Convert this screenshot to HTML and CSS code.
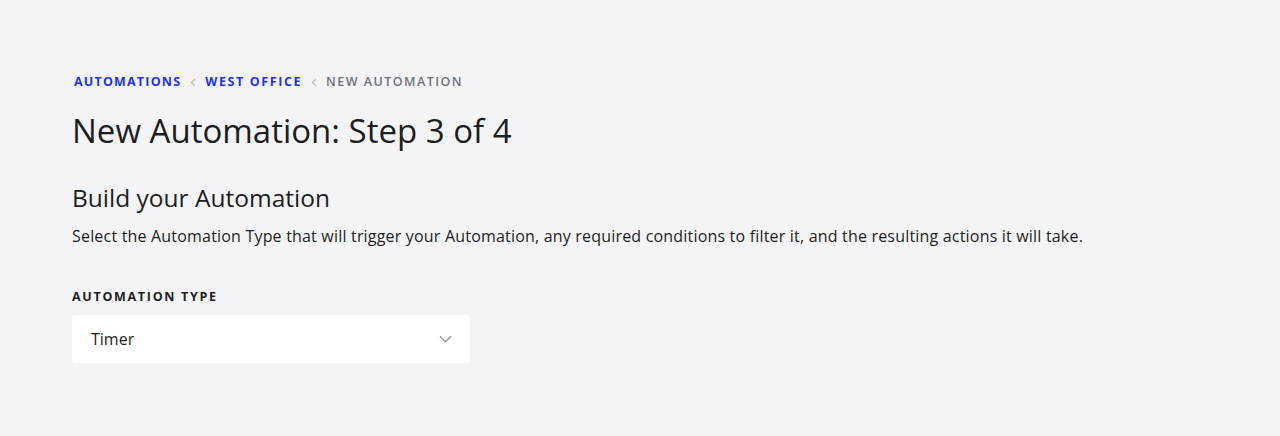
FILE: index.html
```html
<!DOCTYPE html>
<html lang="en">
<head>
<meta charset="utf-8">
<link rel="stylesheet" href="styles.css">
</head>
<body>
<main class="page">
  <nav class="crumbs">
    <a class="crumb link">Automations</a>
    <svg class="sep" width="6" height="9" viewBox="0 0 6 9"><path d="M5 1L1.5 4.5 5 8" fill="none" stroke="#bcc0c4" stroke-width="1.3"/></svg>
    <a class="crumb link wide">West Office</a>
    <svg class="sep" width="6" height="9" viewBox="0 0 6 9"><path d="M5 1L1.5 4.5 5 8" fill="none" stroke="#bcc0c4" stroke-width="1.3"/></svg>
    <span class="crumb current">New Automation</span>
  </nav>
  <h1 class="title">New Automation: Step 3 of 4</h1>
  <h2 class="subtitle">Build your Automation</h2>
  <p class="desc">Select the Automation Type that will trigger your Automation, any required conditions to filter it, and the resulting actions it will take.</p>
  <div class="field">
    <label class="label">Automation Type</label>
    <div class="select">
      <span class="value">Timer</span>
      <svg class="chev" width="13" height="8" viewBox="0 0 13 8"><path d="M1 1.2l5.5 5.5 5.5-5.5" fill="none" stroke="#8a8d91" stroke-width="1.3"/></svg>
    </div>
  </div>
</main>
</body>
</html>
```
FILE: styles.css
```css
html, body { margin: 0; padding: 0; }
body {
  background: #f4f4f6;
  font-family: "Open Sans", "Noto Sans", sans-serif;
  color: #1c1e21;
  width: 1280px;
  height: 436px;
  overflow: hidden;
}
.page { padding: 73px 72px 0; }
.crumbs {
  display: flex;
  align-items: center;
  gap: 9px;
  font-size: 12.5px;
  font-weight: 700;
  letter-spacing: 1.2px;
  text-transform: uppercase;
  line-height: 18px;
  margin-left: 2px;
}
.link { color: #1b32f5; }
.wide { letter-spacing: 1.6px; }
.current { color: #6f7276; font-weight: 600; letter-spacing: 1.45px; }
.sep { display: block; }
.title {
  margin: 20px 0 0;
  font-size: 33px;
  font-weight: 400;
  line-height: 40px;
  letter-spacing: 0;
}
.subtitle {
  margin: 32px 0 0;
  font-size: 24.5px;
  font-weight: 400;
  line-height: 30px;
}
.desc {
  margin: 12px 0 0;
  font-size: 16px;
  line-height: 22px;
  letter-spacing: 0.19px;
}
.field { margin-top: 42px; }
.label {
  display: block;
  font-size: 12.5px;
  font-weight: 700;
  letter-spacing: 1.7px;
  text-transform: uppercase;
  line-height: 16px;
}
.select {
  margin-top: 10px;
  width: 398px;
  height: 48px;
  box-sizing: border-box;
  background: #fff;
  border-radius: 4px;
  display: flex;
  align-items: center;
  justify-content: space-between;
  padding: 0 18px 0 19px;
}
.value { font-size: 16px; }
.chev { display: block; }
```
